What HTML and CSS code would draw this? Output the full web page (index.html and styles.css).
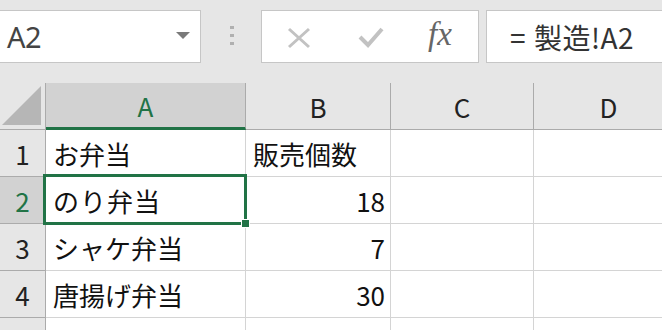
FILE: index.html
```html
<!DOCTYPE html>
<html lang="ja">
<head>
<meta charset="utf-8">
<link rel="stylesheet" href="styles.css">
</head>
<body>
<div class="fbar">
  <div class="namebox">
    <span class="name">A2</span>
    <svg class="drop" width="14" height="7" viewBox="0 0 14 7"><path d="M0 0 H14 L7 7 Z" fill="#7a7a7a"/></svg>
  </div>
  <div class="dots"><i></i><i></i><i></i></div>
  <div class="btns">
    <svg class="ico x" width="24" height="22" viewBox="0 0 24 22"><path d="M2 2 L22 20 M22 2 L2 20" stroke="#c2c2c2" stroke-width="3" fill="none"/></svg>
    <svg class="ico ok" width="26" height="22" viewBox="0 0 26 22"><path d="M2 11 L10 19 L24 3" stroke="#c2c2c2" stroke-width="4" fill="none"/></svg>
    <span class="fx">fx</span>
  </div>
  <div class="formula"><span class="eq">=</span>製造!A2</div>
</div>
<div class="sheet">
  <div class="row head">
    <div class="rh corner"><svg width="40" height="40" viewBox="0 0 40 40"><path d="M39 0 V39 H0 Z" fill="#b6b6b6"/></svg></div>
    <div class="ch ca sel">A</div>
    <div class="ch cb">B</div>
    <div class="ch cc">C</div>
    <div class="ch cd">D</div>
  </div>
  <div class="row">
    <div class="rh">1</div>
    <div class="c ca">お弁当</div>
    <div class="c cb">販売個数</div>
    <div class="c cc"></div>
    <div class="c cd"></div>
  </div>
  <div class="row">
    <div class="rh sel">2</div>
    <div class="c ca active">のり弁当<span class="selbox"></span><span class="handle"></span></div>
    <div class="c cb num">18</div>
    <div class="c cc"></div>
    <div class="c cd"></div>
  </div>
  <div class="row">
    <div class="rh">3</div>
    <div class="c ca">シャケ弁当</div>
    <div class="c cb num">7</div>
    <div class="c cc"></div>
    <div class="c cd"></div>
  </div>
  <div class="row">
    <div class="rh">4</div>
    <div class="c ca">唐揚げ弁当</div>
    <div class="c cb num">30</div>
    <div class="c cc"></div>
    <div class="c cd"></div>
  </div>
  <div class="row">
    <div class="rh">5</div>
    <div class="c ca"></div>
    <div class="c cb"></div>
    <div class="c cc"></div>
    <div class="c cd"></div>
  </div>
</div>
</body>
</html>
```
FILE: styles.css
```css
* { box-sizing: border-box; }
html, body { margin: 0; padding: 0; }
body {
  width: 662px;
  height: 330px;
  overflow: hidden;
  background: #e6e6e6;
  font-family: "Noto Sans CJK JP", "Noto Sans", sans-serif;
  color: #111;
}
.fbar {
  display: flex;
  align-items: flex-start;
  height: 83px;
  padding-top: 10px;
}
.namebox {
  margin-left: -1px;
  width: 202px;
  height: 53px;
  background: #fff;
  border: 1px solid #c6c6c6;
  display: flex;
  align-items: center;
  justify-content: space-between;
  padding: 0 10px 0 7px;
}
.name {
  font-family: "Noto Sans", sans-serif;
  font-size: 29px;
  color: #444;
  letter-spacing: -0.5px;
}
.drop { margin-top: -2px; }
.dots {
  margin-left: 29px;
  margin-top: 16px;
  display: flex;
  flex-direction: column;
  gap: 5px;
}
.dots i {
  display: block;
  width: 4px;
  height: 3px;
  background: #b0b0b0;
}
.btns {
  margin-left: 27px;
  width: 218px;
  height: 53px;
  background: #fff;
  border: 1px solid #c6c6c6;
  display: flex;
  align-items: center;
  padding-left: 25px;
}
.ico.x { margin-top: 2px; }
.ico.ok { margin-left: 47px; margin-top: 1px; }
.fx {
  margin-left: 44px;
  font-family: "Liberation Serif", serif;
  font-style: italic;
  font-size: 33px;
  color: #666;
  margin-top: -4px;
}
.formula {
  margin-left: 7px;
  flex: 1;
  height: 53px;
  background: #fff;
  border: 1px solid #c6c6c6;
  border-right: none;
  padding-left: 23px;
  font-size: 28px;
  color: #333;
  display: flex;
  align-items: center;
  letter-spacing: 0.5px;
}
.eq { margin-right: 8px; }
.sheet { background: #fff; }
.row {
  display: flex;
  height: 47px;
}
.rh {
  width: 46px;
  flex: none;
  background: #e6e6e6;
  border-right: 1px solid #ababab;
  border-bottom: 1px solid #ababab;
  display: flex;
  align-items: center;
  justify-content: center;
  font-size: 26px;
  color: #222;
}
.rh.sel { background: #d2d2d2; color: #217346; }
.corner {
  align-items: flex-end;
  justify-content: flex-end;
  padding: 0 3px 3px 0;
}
.ch {
  flex: none;
  background: #e6e6e6;
  border-right: 1px solid #ababab;
  border-bottom: 1px solid #ababab;
  display: flex;
  align-items: center;
  justify-content: center;
  font-size: 26px;
  color: #222;
}
.ch.sel {
  background: #d2d2d2;
  color: #217346;
  border-bottom: 3px solid #217346;
}
.ca { width: 200px; }
.cb { width: 145px; }
.cc { width: 143px; }
.cd { width: 150px; }
.c {
  flex: none;
  border-right: 1px solid #d4d4d4;
  border-bottom: 1px solid #d4d4d4;
  display: flex;
  align-items: center;
  padding: 0 5px 0 7px;
  font-size: 26px;
  white-space: nowrap;
}
.c.num { justify-content: flex-end; }
.active { position: relative; letter-spacing: 1px; }
.selbox {
  position: absolute;
  left: -3px;
  top: -3px;
  right: -2px;
  bottom: -2px;
  border: 3px solid #217346;
}
.handle {
  position: absolute;
  right: -5px;
  bottom: -5px;
  width: 9px;
  height: 9px;
  background: #217346;
  border: 1px solid #fff;
}
```
